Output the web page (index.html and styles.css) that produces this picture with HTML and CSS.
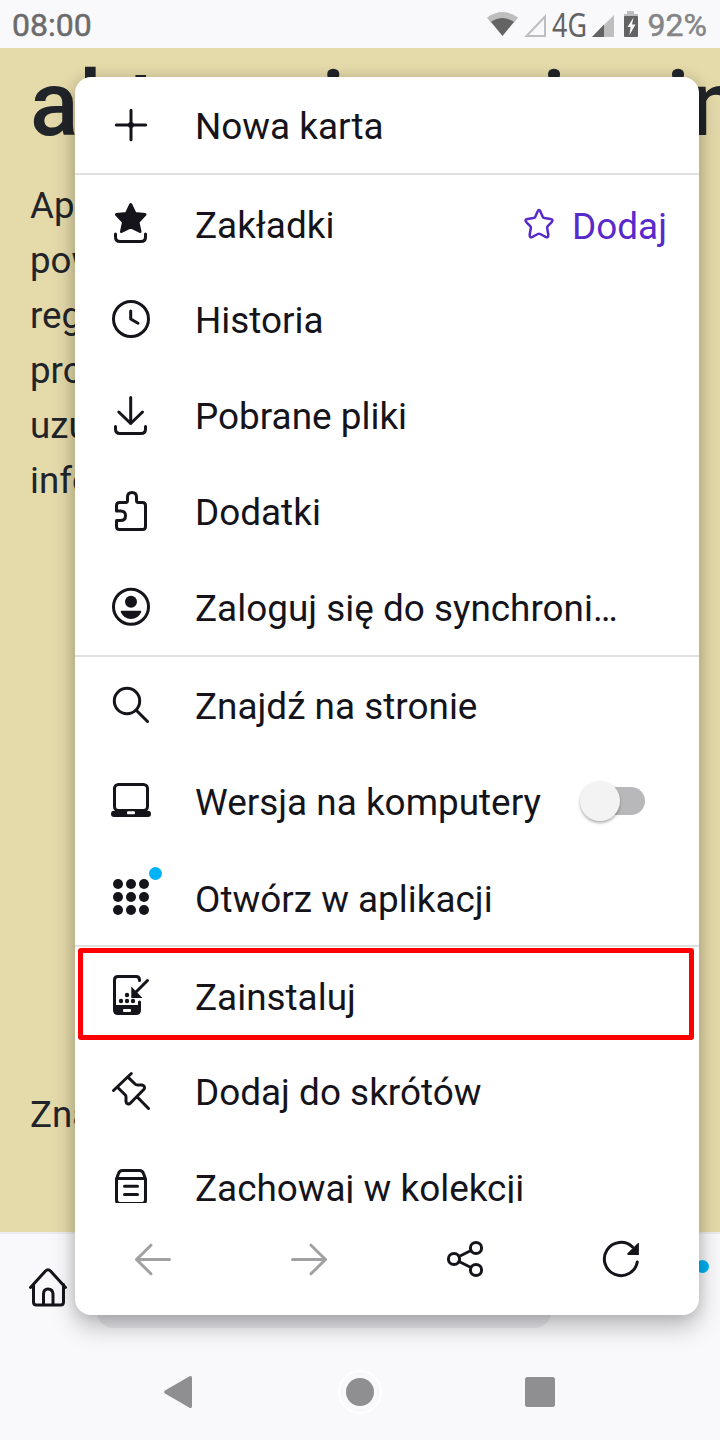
FILE: index.html
```html
<!DOCTYPE html>
<html lang="pl">
<head>
<meta charset="utf-8">
<title>Menu</title>
<link rel="stylesheet" href="styles.css">
</head>
<body>
<div class="phone">
  <header class="status">
    <span class="clock">08:00</span>
    <svg class="signals" width="150" height="48" viewBox="0 0 150 48">
      <path d="M7 17.500Q22.500 6.500 38 17.500L34 23Q22.500 14 11 23Z" fill="#bebebf"/>
      <path d="M11 22Q22.500 14 34 22L22.500 36Z" fill="#636364"/>
      <path d="M46.500 36L65 16.500V36Z" fill="none" stroke="#bebebf" stroke-width="2"/>
      <path d="M112 37L134 15V37Z" fill="#bebebf"/>
      <path d="M112 37L124 24.500V37Z" fill="#636364"/>
    </svg>
    <span class="network">4G</span>
    <svg class="battery" width="16" height="28" viewBox="0 0 16 28">
      <path d="M4 1H11V4H15V7H1V4H4Z" fill="#bebebf"/>
      <rect x="1" y="6" width="14" height="21" rx="1" fill="#636364"/>
      <path d="M10.500 7.500L4.500 17H7.500L6.500 25L12.500 14.500H9Z" fill="#f9f9fb"/>
    </svg>
    <span class="charge">92%</span>
  </header>

  <main class="page">
    <h1 class="headline">aktywnie <span class="word">zmi</span>enin</h1>
    <p class="copy">Aplikacja<br>powiatu<br>regionu<br>produkty<br>uzupełnia<br>informacje</p>
    <p class="copy copy-end">Znajdź</p>
  </main>

  <div class="toolbar">
    <svg class="home" width="48" height="48" viewBox="0 0 48 48"><path d="M6.500 24.500L21.500 8Q24 5.500 26.500 8L41.500 24.500M9.500 21.500V39Q9.500 42 12.500 42H36.500Q39.500 42 39.500 39V21.500M19.500 41V31Q19.500 26 24 26T29 31V41"/></svg>
    <div class="address"></div>
    <i class="notice"></i>
  </div>

  <nav class="system">
    <svg width="48" height="48" viewBox="0 0 48 48"><path d="M9 22.500L33.500 8.300Q36 7.200 36 10V38Q36 40.800 33.500 39.700L9 25.500Q7 24 9 22.500Z"/></svg>
    <svg width="48" height="48" viewBox="0 0 48 48"><circle cx="24" cy="24" r="21" class="ring"/><circle cx="24" cy="24" r="14"/></svg>
    <svg width="48" height="48" viewBox="0 0 48 48"><rect x="9" y="9" width="30" height="30" rx="2.500"/></svg>
  </nav>

  <section class="menu">
    <div class="items">
      <div class="row"><svg class="icon" viewBox="0 0 48 48"><path d="M9.300 24H38.700M24 9.300V38.700"/><circle class="solid" cx="24" cy="24" r="3"/></svg><span class="label">Nowa karta</span></div>
      <hr class="rule">
      <div class="row low"><svg class="icon" viewBox="0 0 48 48"><path class="solid joined" d="M23.700 5.500L28 14.500L38 15.500L31 23L33 32.500L23.700 28L14.500 32.500L16.500 23L9.400 15.500L19.500 14.500Z"/><path d="M8.500 35V38Q8.500 42.500 13 42.500H34Q38.500 42.500 38.500 38V35"/></svg><span class="label">Zakładki</span>
        <div class="add"><svg class="outline" width="34" height="34" viewBox="0 0 34 34"><path d="M15.600 4.500Q17 1.500 18.400 4.500L20.700 9.700Q21.200 10.900 22.500 11L28.500 12Q32 12.700 29.500 15.300L25.800 19Q25 20 25.200 21.200L26.300 27.500Q26.500 31.200 23.500 29.800L18.200 27Q17 26.400 15.800 27L10.500 29.800Q7.500 31.200 7.700 27.500L8.800 21.200Q9 20 8.200 19L4.500 15.300Q2 12.700 5.500 12L11.500 11Q12.800 10.900 13.300 9.700Z"/></svg><span>Dodaj</span></div></div>
      <div class="row"><svg class="icon" viewBox="0 0 48 48"><circle cx="24" cy="24" r="17.500"/><path d="M23.700 16V24L31 28.300"/></svg><span class="label">Historia</span></div>
      <div class="row"><svg class="icon" viewBox="0 0 48 48"><path d="M23.700 6.500V32.500M11.800 21L23.700 32.500L35.500 21M8.500 35.500V38Q8.500 42.500 13 42.500H34Q38.500 42.500 38.500 38V35.500"/></svg><span class="label">Pobrane pliki</span></div>
      <div class="row"><svg class="icon" viewBox="0 0 48 48"><path d="M9.500 24V18.500Q9.500 15.500 12.500 15.500H18.500Q20.500 15.500 20.500 13.500V10Q20.500 5.500 25 5.500T29.500 10V13.500Q29.500 15.500 31.500 15.500H35.500Q38.500 15.500 38.500 18.500V39.500Q38.500 42.500 35.500 42.500H12.500Q9.500 42.500 9.500 39.500V33.500H13.500Q18.500 33.500 18.500 28.700T13.500 24Z"/></svg><span class="label">Dodatki</span></div>
      <div class="row"><svg class="icon" viewBox="0 0 48 48"><circle cx="24" cy="23.700" r="17.500"/><circle class="solid" cx="24" cy="18.700" r="6"/><path class="solid" d="M14.500 27.800H33.500Q35 27.800 34 29.500Q31 36 24 36T14 29.500Q13 27.800 14.500 27.800Z"/></svg><span class="label">Zaloguj się do synchroni…</span></div>
      <hr class="rule">
      <div class="row"><svg class="icon" viewBox="0 0 48 48"><circle cx="20" cy="20" r="12.700"/><path d="M29.500 29.500L40.500 40.500"/></svg><span class="label">Znajdź na stronie</span></div>
      <div class="row"><svg class="icon" viewBox="0 0 48 48"><rect x="7.500" y="7.500" width="33" height="26" rx="4"/><rect class="solid" x="4" y="33.700" width="40" height="6.300" rx="3"/><rect class="hole" x="20" y="34.300" width="8" height="3" rx="1"/></svg><span class="label">Wersja na komputery</span><span class="toggle"><i class="thumb"></i></span></div>
      <div class="row low"><svg class="icon" viewBox="0 0 48 48"><g class="solid"><circle cx="11" cy="11" r="5"/><circle cx="24" cy="11" r="5"/><circle cx="37" cy="11" r="5"/><circle cx="11" cy="24" r="5"/><circle cx="24" cy="24" r="5"/><circle cx="37" cy="24" r="5"/><circle cx="11" cy="37" r="5"/><circle cx="24" cy="37" r="5"/><circle cx="37" cy="37" r="5"/></g></svg><i class="badge"></i><span class="label">Otwórz w aplikacji</span></div>
      <hr class="rule">
      <div class="row low"><svg class="icon" viewBox="0 0 48 48"><path d="M32.500 9.500V9Q32.500 5.500 29 5.500H11Q7.500 5.500 7.500 9V39Q7.500 42.500 11 42.500H29Q32.500 42.500 32.500 39V31M40.500 9.500L27 23"/><path class="solid" d="M7 34H33V40Q33 43 30 43H10Q7 43 7 40ZM24.300 15.500L35.500 26.900H24.300Z"/><g class="solid"><circle cx="14" cy="30" r="2.200"/><circle cx="20" cy="30" r="2.200"/><circle cx="26" cy="30" r="2.200"/><circle cx="20" cy="24" r="2.200"/></g><rect class="hole" x="16" y="38" width="8" height="3" rx="1"/></svg><span class="label">Zainstaluj</span><i class="marker"></i></div>
      <div class="row"><svg class="icon" viewBox="0 0 48 48"><path d="M6.500 23.500L24.300 6.500M10.500 20.300L18.300 28Q19 28.700 19 30V34.500Q19.500 38 23 36.500L37 22.300Q38.700 19 35 18H30.500Q29 18 28.300 17.300L20.700 9.900M30 29.700L41.500 41.500"/></svg><span class="label">Dodaj do skrótów</span></div>
      <div class="row"><svg class="icon" viewBox="0 0 48 48"><path d="M9.500 16L11.500 10.500Q12.500 7.500 15.500 7.500H32.500Q35.500 7.500 36.500 10.500L38.500 16V37Q38.500 40.500 35 40.500H13Q9.500 40.500 9.500 37ZM9.500 15.500H38.500M17.500 23.300H30.500M17.500 31.500H30.500"/></svg><span class="label">Zachowaj w kolekcji</span></div>
    </div>
    <div class="actions">
      <svg class="icon muted" viewBox="0 0 48 48"><path d="M40.500 24.500H7.500M22 10.200L7.500 24.500L22 38.800"/></svg>
      <svg class="icon muted" viewBox="0 0 48 48"><path d="M7.500 24.500H40.500M26 10.200L40.500 24.500L26 38.800"/></svg>
      <svg class="icon" viewBox="0 0 48 48"><circle cx="13" cy="24" r="5.600"/><circle cx="35" cy="13" r="5.600"/><circle cx="35" cy="35" r="5.600"/><path d="M18 21.500L30 15.500M18 26.500L30 32.500"/></svg>
      <svg class="icon" viewBox="0 0 48 48"><path d="M40.300 27A16.600 16.600 0 1 1 35.500 12"/><path class="solid" d="M41.900 8V20H31Q29.500 19.500 30.500 18.300L40 9Q41 7.500 41.900 8Z"/></svg>
    </div>
  </section>
</div>
</body>
</html>
```
FILE: styles.css
```css
* { box-sizing: border-box; }
body { margin: 0; font-family: Roboto, sans-serif; }
.phone {
  position: relative;
  display: flex;
  flex-direction: column;
  width: 720px;
  height: 1440px;
  overflow: hidden;
  background: #f9f9fb;
}
.status {
  position: relative;
  display: flex;
  flex: none;
  align-items: center;
  height: 48px;
  padding: 1px 13px 0 12px;
  font-size: 32px;
  color: #6b6b6c;
  -webkit-text-stroke: .5px currentColor;
}
.signals { position: absolute; left: 480px; top: 0; }
.network {
  position: absolute;
  left: 552px;
  top: 3px;
  font: 32px/44px "Noto Sans", sans-serif;
  color: #636364;
  -webkit-text-stroke: 0;
  transform: scaleX(.84);
  transform-origin: 0 0;
}
.battery { position: absolute; left: 623px; top: 10px; }
.charge { margin-left: auto; color: #858586; }

.page {
  display: flex;
  flex: 1;
  flex-direction: column;
  padding: 0 30px;
  background: #e5daaa;
  color: #212529;
  overflow: hidden;
}
.headline {
  margin: 0;
  padding-top: 2px;
  font-size: 90px;
  font-weight: 500;
  letter-spacing: .9px;
  line-height: 110px;
  white-space: nowrap;
}
.word { margin-left: -1px; }
.copy { margin: 17.600px 0 0; font-size: 36.670px; line-height: 55px; }
.copy-end { margin-top: auto; margin-bottom: 90px; }

.toolbar {
  display: flex;
  flex: none;
  height: 112px;
  padding-left: 24px;
  border-top: 2px solid #ececf0;
}
.home { margin-top: 29px; fill: none; stroke: #15141a; stroke-width: 3; stroke-linecap: round; }
.address { width: 454px; height: 80px; margin: 14px 0 0 25px; border-radius: 16px; background: #e9e9ed; }
.notice { width: 13px; height: 13px; margin: 26px 0 0 145px; border-radius: 50%; background: #00b3f4; }

.system {
  display: flex;
  flex: none;
  justify-content: center;
  align-items: center;
  gap: 132px;
  height: 96px;
  fill: #8f8f91;
}
.ring { fill: none; stroke: #fff; stroke-width: 1.500; }

.menu {
  position: absolute;
  left: 75px;
  top: 77px;
  width: 624px;
  height: 1238px;
  border-radius: 16px;
  background: #fff;
  box-shadow: 0 12px 24px rgba(0, 0, 0, .25), 0 0 14px rgba(0, 0, 0, .12);
  color: #15141a;
}
.items { height: 1126px; overflow: hidden; }
.row {
  position: relative;
  display: flex;
  align-items: center;
  height: 96px;
  padding-left: 32px;
}
.icon {
  flex: none;
  width: 48px;
  height: 48px;
  fill: none;
  stroke: #15141a;
  stroke-width: 3;
  stroke-linecap: round;
  stroke-linejoin: round;
}
.solid { fill: #15141a; stroke: none; }
.joined { stroke: #15141a; }
.hole { fill: #fff; stroke: none; }
.label {
  padding-top: 3px;
  margin-left: 40px;
  font-size: 36.900px;
  line-height: 44px;
  white-space: nowrap;
}
.low .label { padding-top: 5px; }
.rule { height: 2px; margin: 0; border: 0; background: #e0e0e1; }
.add {
  display: flex;
  align-items: center;
  gap: 16px;
  margin: 7px 32px 0 auto;
  color: #592acb;
  font-size: 36.900px;
  line-height: 44px;
}
.outline { margin-top: -5px; fill: none; stroke: #592acb; stroke-width: 2.500; }
.toggle {
  position: relative;
  width: 60px;
  height: 28px;
  margin: 0 54px 0 auto;
  border-radius: 14px;
  background: #b8b8ba;
}
.thumb {
  position: absolute;
  left: -5px;
  top: -6px;
  width: 40px;
  height: 40px;
  border-radius: 50%;
  background: #f3f3f3;
  box-shadow: 0 2px 3px rgba(0, 0, 0, .3);
}
.badge {
  position: absolute;
  left: 73.500px;
  top: 17.500px;
  width: 13px;
  height: 13px;
  border-radius: 50%;
  background: #00b3f4;
}
.marker {
  position: absolute;
  left: 3px;
  top: 1px;
  width: 616px;
  height: 92px;
  border: 5px solid #f00;
  border-radius: 3px;
}
.actions {
  display: grid;
  grid-template-columns: repeat(4, 1fr);
  place-items: center;
  height: 112px;
}
.muted { stroke: #a1a1a3; }
```
